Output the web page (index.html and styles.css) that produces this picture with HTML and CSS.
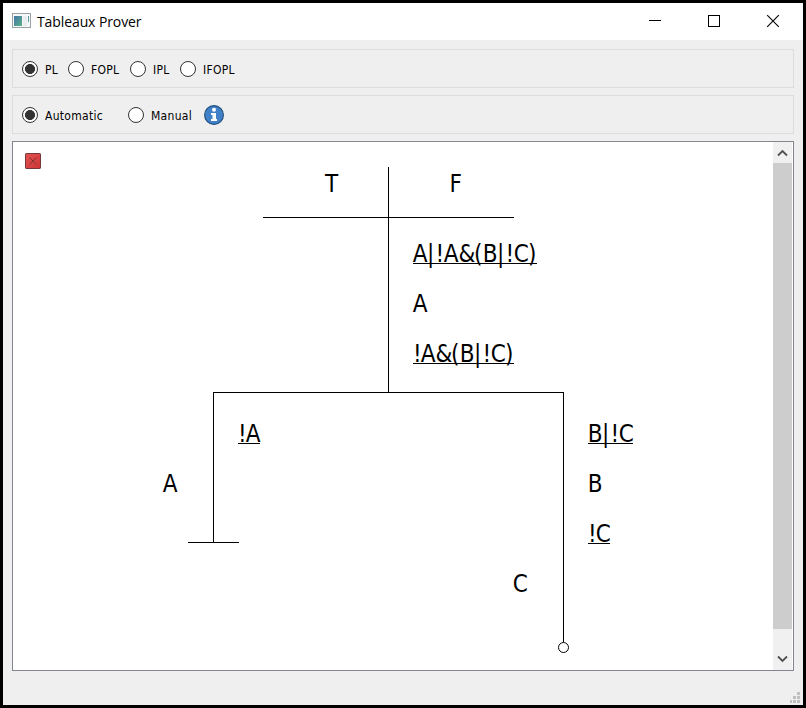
FILE: index.html
```html
<!DOCTYPE html>
<html lang="en">
<head>
<meta charset="utf-8">
<title>Tableaux Prover</title>
<link rel="stylesheet" href="styles.css">
</head>
<body>
<div class="window">
  <header class="titlebar">
    <svg class="app-icon" width="19" height="16" viewBox="0 0 19 16">
      <defs><linearGradient id="app" x1="0" y1="0" x2="1" y2="1"><stop offset="0" stop-color="#4674a8"/><stop offset="1" stop-color="#58b287"/></linearGradient></defs>
      <rect x=".5" y=".5" width="18" height="14" fill="#f7f8f8" stroke="#9aa0a6"/>
      <rect x="2" y="3" width="8" height="10" fill="url(#app)"/>
      <rect x="11" y="3" width="4" height="10" fill="#e9edef"/>
      <rect x="16" y="3" width="1" height="6" fill="#5a9ba0"/>
    </svg>
    <h1 class="title">Tableaux Prover</h1>
    <div class="controls">
      <svg width="14" height="14" viewBox="0 0 14 14"><path d="M1 6.5h12" stroke="#000"/></svg>
      <svg width="14" height="14" viewBox="0 0 14 14"><rect x="1.5" y="1.5" width="11" height="11" fill="none" stroke="#000"/></svg>
      <svg width="14" height="14" viewBox="0 0 14 14"><path d="M1.2 1.2l11.6 11.6M12.8 1.2L1.2 12.8" stroke="#000" stroke-width="1.1"/></svg>
    </div>
  </header>
  <main class="content">
    <div class="group">
      <label class="option w-pl"><span class="radio on"></span><span class="label">PL</span></label>
      <label class="option w-fopl"><span class="radio"></span><span class="label">FOPL</span></label>
      <label class="option w-ipl"><span class="radio"></span><span class="label">IPL</span></label>
      <label class="option"><span class="radio"></span><span class="label">IFOPL</span></label>
    </div>
    <div class="group">
      <label class="option w-auto"><span class="radio on"></span><span class="label">Automatic</span></label>
      <label class="option w-manual"><span class="radio"></span><span class="label">Manual</span></label>
      <svg class="info" width="20" height="20" viewBox="0 0 20 20">
        <circle cx="10" cy="10" r="9.4" fill="#4080c8" stroke="#23517f" stroke-width="1.2"/>
        <circle cx="10" cy="4.800" r="2" fill="#fff"/>
        <path d="M7 8h5v6h1v2H7v-2h1.500v-4H7z" fill="#fff"/>
      </svg>
    </div>
    <div class="view">
      <svg class="tableau" width="760" height="528" viewBox="13 142 760 528">
        <defs><linearGradient id="red" x1="0" y1="0" x2="1" y2="1"><stop offset="0" stop-color="#e25252"/><stop offset="1" stop-color="#cf3434"/></linearGradient></defs>
        <rect x="25.5" y="153.5" width="15" height="15" rx=".7" fill="url(#red)" stroke="#713838"/>
        <path d="M29.5 157.500l7 7M36.500 157.500l-7 7" stroke="#7a3030" stroke-width=".9"/>
        <g class="lines">
          <path d="M388.5 167v226M263 217.500h251M213 392.500h351M213.500 392v151M188 542.500h51M563.500 392v250"/>
          <path d="M413 263.500h124M413 363.500h101M238 443.500h22M588 443.500h45M588 543.500h22"/>
          <circle cx="563.500" cy="647.500" r="5"/>
        </g>
        <g class="formulas">
          <text x="325" y="192">T</text>
          <text x="449.500" y="192">F</text>
          <text x="412.800 427 435.500 443.800 458.500 474 482.800 497 505.500 513.800 528" y="262">A|!A&amp;(B|!C)</text>
          <text x="412.800" y="312">A</text>
          <text x="413 420.800 435.500 451 459.800 474 482.500 490.800 505" y="362">!A&amp;(B|!C)</text>
          <text x="238 245.800" y="442">!A</text>
          <text x="162.800" y="492">A</text>
          <text x="587.800 602 610.500 618.800" y="442">B|!C</text>
          <text x="587.800" y="492">B</text>
          <text x="588 595.800" y="542">!C</text>
          <text x="512.800" y="592">C</text>
        </g>
      </svg>
      <div class="scrollbar">
        <svg width="19" height="21" viewBox="0 0 19 21"><path d="M5 13.500l4.500-4.500 4.500 4.500" fill="none" stroke="#505050" stroke-width="1.800"/></svg>
        <div class="thumb"></div>
        <svg class="down" width="19" height="21" viewBox="0 0 19 21"><path d="M5 7.500l4.500 4.500 4.500-4.500" fill="none" stroke="#505050" stroke-width="1.800"/></svg>
      </div>
    </div>
  </main>
  <footer class="status">
    <svg width="10" height="11" viewBox="0 0 10 11"><path d="M7 0h3v3h-3zM3 4h3v3h-3zM7 4h3v3h-3zM0 8h2v3h-2zM3 8h3v3h-3zM7 8h3v3h-3z" fill="#bfbfbf"/></svg>
  </footer>
</div>
</body>
</html>
```
FILE: styles.css
```css
* { box-sizing: border-box; }
body { margin: 0; background: #000; overflow: hidden; }
svg { display: block; flex: none; }
.window {
  width: 806px; height: 708px; border: 3px solid #000;
  background: #efefef; display: flex; flex-direction: column;
}
.titlebar {
  height: 37px; background: #fff; display: flex; align-items: center;
  padding: 0 23px 0 9px;
}
.app-icon { margin-top: -1px; }
.title {
  margin: 0 0 0 6px; font: 400 14px/20px "Open Sans", sans-serif;
  letter-spacing: -0.1px; color: #000; white-space: nowrap;
}
.controls { margin-left: auto; display: flex; gap: 45px; margin-top: -1px; }
.content { padding: 9px 9px 0; display: flex; flex-direction: column; gap: 7px; }
.group {
  height: 39px; border: 1px solid #dcdcdc; padding: 0 9px;
  display: flex; align-items: center;
}
.option {
  display: flex; align-items: center; gap: 7px; white-space: nowrap;
  font: 12px/16px "DejaVu Sans Condensed", "DejaVu Sans", sans-serif; color: #000;
}
.label { letter-spacing: 0.3px; padding-top: 2px; }
.w-pl { width: 46px; }
.w-fopl { width: 62px; }
.w-ipl { width: 50px; }
.w-auto { width: 106px; }
.w-manual { width: 76px; }
.radio {
  width: 16px; height: 16px; border: 1px solid #333; border-radius: 50%;
  background: #fff; flex: none;
}
.radio.on { background: radial-gradient(circle, #333 4.7px, #fff 5.3px); }
.view {
  height: 530px; border: 1px solid #828790; background: #fff;
  display: flex;
}
.lines { fill: none; stroke: #000; stroke-width: 1; }
.formulas { font: 24px "DejaVu Sans Condensed", "DejaVu Sans", sans-serif; fill: #000; }
.scrollbar { width: 19px; background: #f0f0f0; display: flex; flex-direction: column; }
.thumb { height: 466px; background: #cdcdcd; }
.down { margin-top: auto; }
.status { flex: 1; display: flex; justify-content: flex-end; align-items: flex-end; padding: 0 3px 2px 0; }
```
